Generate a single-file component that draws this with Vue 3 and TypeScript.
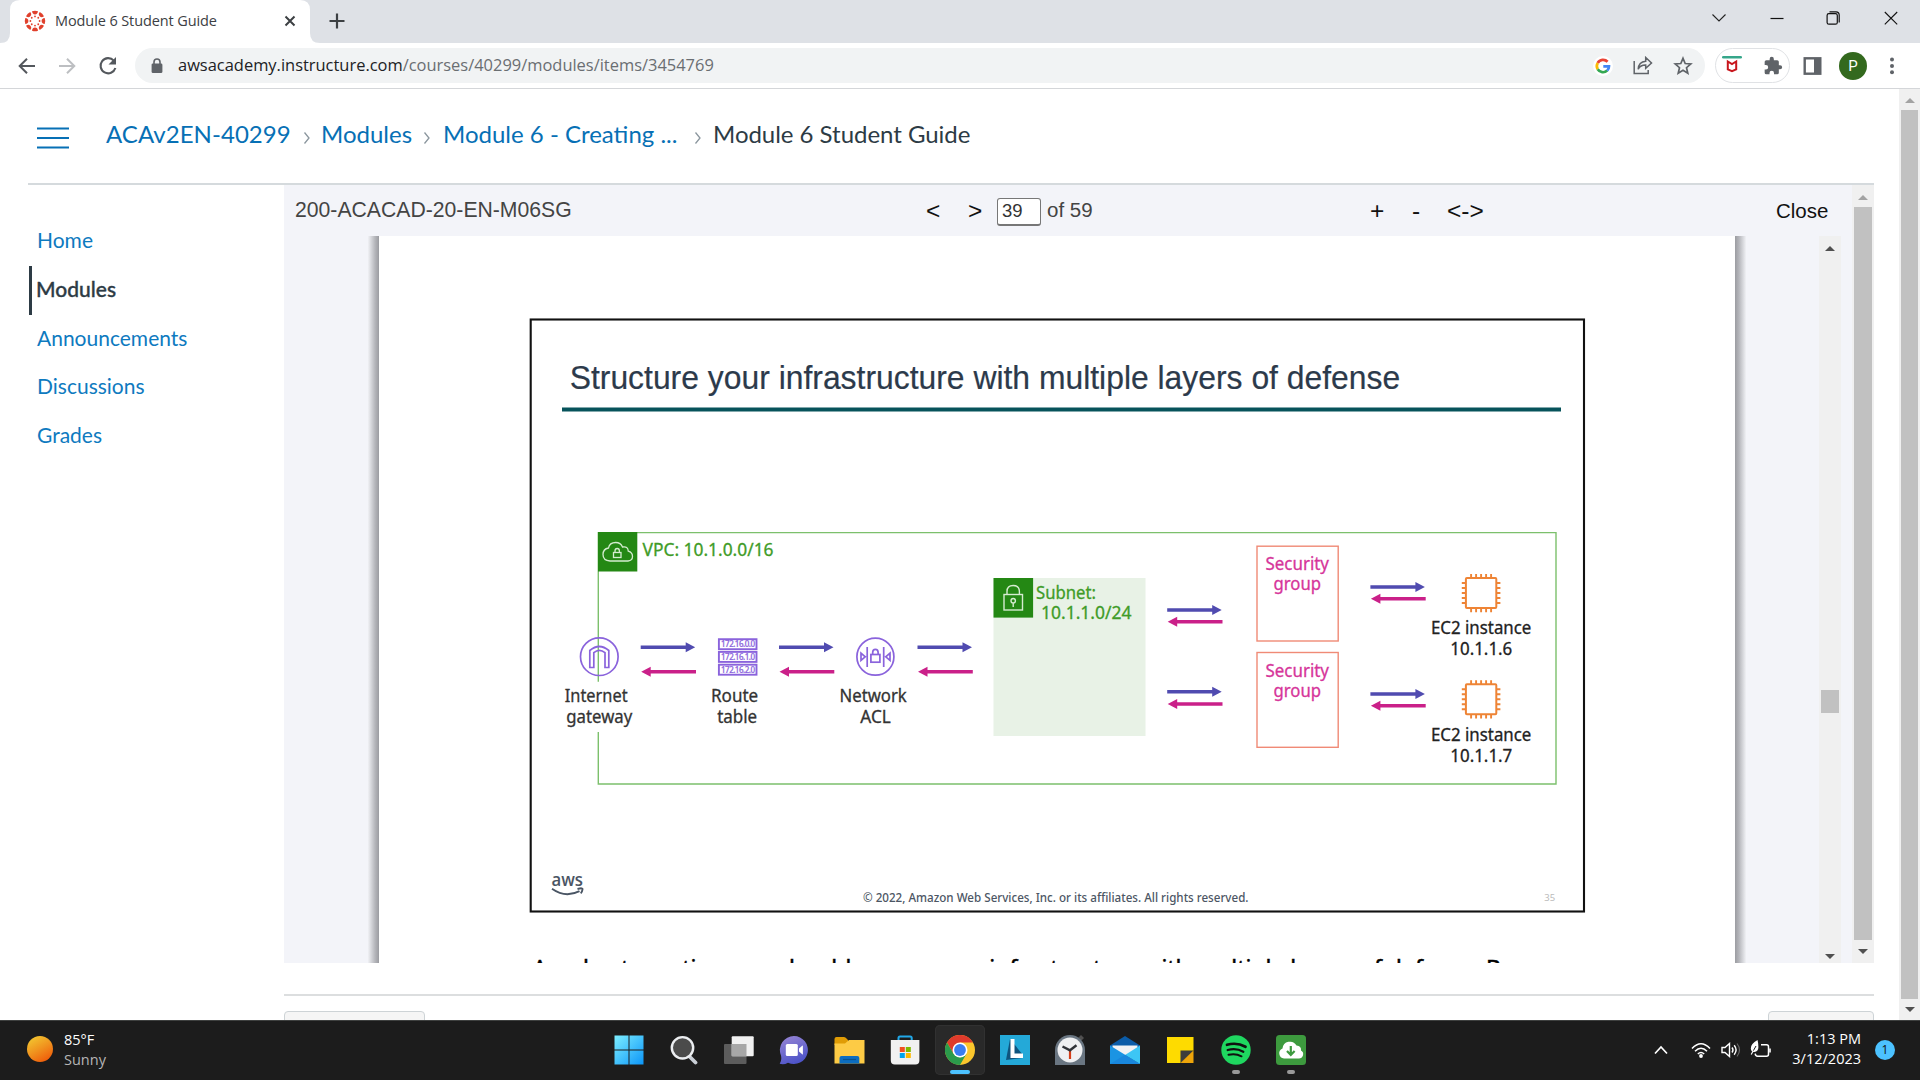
<script setup lang="ts">
interface Arrow { x: number; y: number; w: number; back: boolean }
interface Label { t: string; x: number; y: number; w: number; c?: string }

const nav: string[] = ['Home', 'Modules', 'Announcements', 'Discussions', 'Grades']

const pair = (x: number, y1: number, y2: number): Arrow[] => [
  { x, y: y1, w: 54.5, back: false },
  { x: x + 0.5, y: y2, w: 54.8, back: true },
]
const arrows: Arrow[] = [
  ...pair(640.7, 647.3, 671.7),
  ...pair(779, 647.3, 671.7),
  ...pair(917.5, 647.3, 671.7),
  ...pair(1167.2, 610, 621.7),
  ...pair(1167.2, 691.7, 704),
  ...pair(1370.4, 587, 598.7),
  ...pair(1370.4, 694, 705.7),
]
const arrowPath = (a: Arrow): string =>
  a.back
    ? `M${a.x} ${a.y}l9.5-5v3.3h${a.w - 9.5}v3.4h-${a.w - 9.5}v3.3z`
    : `M${a.x + a.w} ${a.y}l-9.5-5v3.3h-${a.w - 9.5}v3.4h${a.w - 9.5}v3.3z`

const green = '#3f9c28'
const pink = '#d6359a'
const labels: Label[] = [
  { t: 'VPC: 10.1.0.0/16', x: 642.5, y: 556, w: 131, c: green },
  { t: 'Subnet:', x: 1036, y: 598.5, w: 60, c: green },
  { t: '10.1.1.0/24', x: 1041, y: 619.3, w: 90.5, c: green },
  { t: 'Internet', x: 564.8, y: 702.4, w: 62.8, c: '#333' },
  { t: 'gateway', x: 566.3, y: 723, w: 66, c: '#333' },
  { t: 'Route', x: 711, y: 702.4, w: 47.2, c: '#333' },
  { t: 'table', x: 717.2, y: 722.8, w: 40, c: '#333' },
  { t: 'Network', x: 839.5, y: 702.4, w: 67.3, c: '#333' },
  { t: 'ACL', x: 860.3, y: 723, w: 30.5, c: '#333' },
  { t: 'Security', x: 1265.5, y: 570.3, w: 63.5, c: pink },
  { t: 'group', x: 1273.5, y: 590.4, w: 47.5, c: pink },
  { t: 'Security', x: 1265.5, y: 677.2, w: 63.5, c: pink },
  { t: 'group', x: 1273.5, y: 697.4, w: 47.5, c: pink },
  { t: 'EC2 instance', x: 1431, y: 634, w: 100.3, c: '#222' },
  { t: '10.1.1.6', x: 1450.3, y: 654.7, w: 62, c: '#222' },
  { t: 'EC2 instance', x: 1431, y: 741, w: 100.3, c: '#222' },
  { t: '10.1.1.7', x: 1450.3, y: 761.5, w: 62, c: '#222' },
]
const pins = [-10, -5, 0, 5, 10]
const rays = Array.from({ length: 8 }, (_, i) => i * 45)
</script>

<template>
  <div class="screen">
    <header class="tabs">
      <svg class="tabshape" width="332" height="43" viewBox="0 0 332 43">
        <path d="M0 43q10 0 10-10V10Q10 0 20 0h280q10 0 10 10v23q0 10 10 10z" fill="#fff" />
      </svg>
      <div class="tab">
        <svg class="fav" width="22" height="22" viewBox="-11 -11 22 22">
          <g fill="#e0402c">
            <g v-for="r in rays" :key="r" :transform="`rotate(${r})`">
              <path d="M-3-9.700Q0-10.800 3-9.700Q2.600-6.600 0-6.600T-3-9.700z" />
              <circle cy="-4.600" r=".9" />
            </g>
          </g>
        </svg>
        <span class="tabtitle">Module 6 Student Guide</span>
        <svg class="tabx" width="12" height="12" viewBox="0 0 12 12"><path d="M1.500 1.500l9 9m0-9l-9 9" stroke="#3c4043" stroke-width="2" /></svg>
      </div>
      <svg class="plus" width="16" height="16" viewBox="0 0 16 16"><path d="M8 .5v15M.5 8h15" stroke="#3c4043" stroke-width="2.200" /></svg>
      <div class="winctl">
        <svg width="16" height="16" viewBox="0 0 16 16"><path d="M1.500 4.500L8 11l6.500-6.500" fill="none" stroke="#222" stroke-width="1.100" /></svg>
        <svg width="14" height="16" viewBox="0 0 14 16"><path d="M.5 8.500h13" stroke="#111" stroke-width="1.200" /></svg>
        <svg width="15" height="16" viewBox="0 0 15 16"><g fill="none" stroke="#111" stroke-width="1.200"><rect x="1.100" y="3.600" width="10.200" height="10.600" rx="1.800" /><path d="M3.500 1.900h6.500q3.200 0 3.200 3.200v7.400" /></g></svg>
        <svg width="14" height="16" viewBox="0 0 14 16"><path d="M.8 2l12.400 12.400m0-12.400L.8 14.400" stroke="#111" stroke-width="1.100" /></svg>
      </div>
    </header>

    <div class="toolbar">
      <svg class="nav1" width="18" height="18" viewBox="0 0 18 18"><path d="M17 9H2m7-7.300L1.700 9 9 16.300" fill="none" stroke="#54585d" stroke-width="2" /></svg>
      <svg class="nav2" width="18" height="18" viewBox="0 0 18 18"><path d="M1 9h15M9 1.700L16.300 9 9 16.300" fill="none" stroke="#bdbfc2" stroke-width="2" /></svg>
      <svg class="nav3" width="20" height="20" viewBox="0 0 20 20"><path d="M15.800 4.600A7.600 7.600 0 1 0 17.400 12" fill="none" stroke="#54585d" stroke-width="2.100" /><path d="M18 1v7.500h-7.500z" fill="#54585d" /></svg>
      <div class="omni">
        <svg class="lock" width="12" height="16" viewBox="0 0 12 16"><rect x=".6" y="5.500" width="10.800" height="9.500" rx="1.300" fill="#5f6368" /><path d="M3 6V4a3 3 0 0 1 6 0v2" fill="none" stroke="#5f6368" stroke-width="1.600" /></svg>
        <span class="url"><b>awsacademy.instructure.com</b>/courses/40299/modules/items/3454769</span>
        <svg class="goog" width="20" height="20" viewBox="0 0 20 20"><circle cx="10" cy="10" r="10" fill="#fff" /><g fill="none" stroke-width="2.700"><path d="M14.600 5.800A6.200 6.200 0 0 0 4.700 7" stroke="#ea4335" /><path d="M4.700 7a6.200 6.200 0 0 0 0 6.300" stroke="#fbbc05" /><path d="M4.700 13.300a6.200 6.200 0 0 0 9.500 1.300" stroke="#34a853" /><path d="M14.200 14.600A6 6 0 0 0 16 10.300H10.300" stroke="#4285f4" /></g></svg>
        <svg class="share" width="20" height="19" viewBox="0 0 20 19"><path d="M1.200 5v12.500h14V14M5.200 13.200q.4-7.500 7.500-8V1.500L18.500 7l-5.800 5.200V9.100Q7.500 9 5.200 13.200z" fill="none" stroke="#5f6368" stroke-width="1.500" /></svg>
        <svg class="star" width="20" height="20" viewBox="0 0 20 20"><path d="M10 2.300l2.200 5.200 5.600.5-4.300 3.700 1.300 5.500L10 14.300l-4.800 2.900 1.300-5.500L2.200 8l5.600-.5z" fill="none" stroke="#5f6368" stroke-width="1.700" /></svg>
      </div>
      <div class="ext">
        <svg width="22" height="20" viewBox="0 0 22 20"><rect x="1" y="0" width="20" height="2.600" rx="1.300" fill="#35a68a" /><path d="M6.800 5.500v7.800l4.200 1.900 4.200-1.900V5.500L11 8z" fill="none" stroke="#c8161d" stroke-width="2" /></svg>
        <svg width="20" height="20" viewBox="0 0 24 24"><path fill="#5f6368" d="M20.500 11H19V7a2 2 0 0 0-2-2h-4V3.500a2.500 2.500 0 0 0-5 0V5H4a2 2 0 0 0-2 2v3.800h1.500a2.700 2.700 0 0 1 0 5.400H2V20a2 2 0 0 0 2 2h3.800v-1.500a2.700 2.700 0 0 1 5.400 0V22H17a2 2 0 0 0 2-2v-4h1.500a2.500 2.500 0 0 0 0-5z" /></svg>
      </div>
      <svg class="side" width="19" height="18" viewBox="0 0 19 18"><rect x="1.700" y="1.300" width="15.600" height="15.400" fill="#fff" stroke="#5f6368" stroke-width="2.400" /><path d="M11 1h7v16h-7z" fill="#5f6368" /></svg>
      <div class="avatar">P</div>
      <svg class="dots" width="6" height="18" viewBox="0 0 6 18"><g fill="#5f6368"><circle cx="3" cy="2.500" r="2" /><circle cx="3" cy="8.900" r="2" /><circle cx="3" cy="15.300" r="2" /></g></svg>
    </div>

    <div class="viewport">
      <div class="canvas">
        <div class="crumbs">
          <svg class="burger" width="33" height="24" viewBox="0 0 33 24"><path d="M0 2.500h32M0 12h32M0 21.500h32" stroke="#0770b5" stroke-width="2" /></svg>
          <a class="c1">ACAv2EN-40299</a>
          <svg class="sep s1" width="8" height="14" viewBox="0 0 8 14"><path d="M1.500 1.500L6 7l-4.500 5.500" fill="none" stroke="#8b969e" stroke-width="1.300" /></svg>
          <a class="c2">Modules</a>
          <svg class="sep s2" width="8" height="14" viewBox="0 0 8 14"><path d="M1.500 1.500L6 7l-4.500 5.500" fill="none" stroke="#8b969e" stroke-width="1.300" /></svg>
          <a class="c3">Module 6 - Creating ...</a>
          <svg class="sep s3" width="8" height="14" viewBox="0 0 8 14"><path d="M1.500 1.500L6 7l-4.500 5.500" fill="none" stroke="#8b969e" stroke-width="1.300" /></svg>
          <span class="c4">Module 6 Student Guide</span>
        </div>
        <div class="body">
          <nav class="menu">
            <a v-for="n in nav" :key="n" :class="{ on: n === 'Modules' }">{{ n }}</a>
          </nav>
          <main class="main">
            <div class="frame">
              <div class="viewer">
                <div class="vbar">
                  <span class="doc">200-ACACAD-20-EN-M06SG</span>
                  <span class="sym prev">&lt;</span>
                  <span class="sym next">&gt;</span>
                  <span class="num">39</span>
                  <span class="of">of 59</span>
                  <span class="sym zin">+</span>
                  <span class="sym zout">-</span>
                  <span class="sym fit">&lt;-&gt;</span>
                  <span class="close">Close</span>
                </div>
                <div class="pages">
                  <div class="shade left"></div>
                  <svg class="page" width="1356" height="727" viewBox="379 236 1356 727">
                    <rect x="379" y="236" width="1356" height="727" fill="#fff" />
                    <rect x="530.700" y="319.500" width="1053.300" height="592" fill="none" stroke="#111" stroke-width="2.100" />
                    <text x="569.700" y="388.500" textLength="830.500" lengthAdjust="spacingAndGlyphs" class="title">Structure your infrastructure with multiple layers of defense</text>
                    <rect x="562" y="407.500" width="999" height="4" fill="#07535b" />
                    <path d="M598.300 681.700V532.600H1556V784H598.300V732" fill="none" stroke="#7cc06c" stroke-width="1.400" />
                    <rect x="598" y="532" width="39.300" height="39.500" fill="#248814" />
                    <g fill="none" stroke="#d5ecd0" stroke-width="1.300">
                      <path d="M610 561q-7-.5-7-6.500 0-5.500 5.500-6.500 1-5.500 7.200-5.500 5 0 6.800 4.500 5.500-1 5.800 4.200 4.200 1.200 4.200 5.300 0 4-4.500 4.500z" />
                      <rect x="613.500" y="552.500" width="7.500" height="5" /><path d="M615 552.500v-1.500q0-2.500 2.200-2.500t2.200 2.500v1.500" />
                    </g>
                    <rect x="993.500" y="578" width="152" height="158" fill="#e8f2e6" />
                    <rect x="993.500" y="578" width="39.600" height="39.600" fill="#248814" />
                    <g fill="none" stroke="#d5ecd0" stroke-width="1.400">
                      <rect x="1004" y="594.500" width="18.500" height="15.500" /><path d="M1007 594.500v-3q0-6 6.200-6t6.200 6v3" /><circle cx="1013.200" cy="600.700" r="2.200" /><path d="M1013.200 603v4" />
                    </g>

                    <g fill="none" stroke="#8a63dc" stroke-width="1.700">
                      <circle cx="599.300" cy="656.700" r="18.800" />
                      <path d="M589.800 667.500V650.500Q599.300 642.500 608.800 650.500V667.500H605V652.700Q599.300 648 593.800 652.700V667.500z" />
                      <circle cx="875.400" cy="656.700" r="18.500" />
                      <path d="M867.200 647v20M883.700 647v20M861 653.200l4.200 3.600-4.200 3.600zM890 653.200l-4.200 3.600 4.200 3.600z" />
                      <rect x="870.900" y="654.500" width="9" height="7.700" /><path d="M872.700 654.500v-2.200q0-3 2.700-3t2.700 3v2.200" />
                      <g stroke-width="1.900">
                        <rect x="718.900" y="639.200" width="37.600" height="10" /><rect x="718.900" y="651.900" width="37.600" height="10" /><rect x="718.900" y="664.700" width="37.600" height="10" />
                      </g>
                    </g>
                    <g class="ip">
                      <text x="721" y="647.200" textLength="34">172.16.0.0</text>
                      <text x="721" y="659.900" textLength="34">172.16.1.0</text>
                      <text x="721" y="672.700" textLength="34">172.16.2.0</text>
                    </g>

                    <path v-for="(a, i) in arrows" :key="i" :d="arrowPath(a)" :fill="a.back ? '#ca2089' : '#504bb0'" />
                    <g fill="none" stroke="#f08a76" stroke-width="1.400">
                      <rect x="1257" y="546.200" width="81.200" height="94.800" />
                      <rect x="1257" y="652.500" width="81.200" height="94.800" />
                    </g>
                    <g v-for="cy in [593, 699.3]" :key="cy" :transform="`translate(1481.1 ${cy})`" fill="none" stroke="#ee8435">
                      <rect x="-15.200" y="-15" width="30.400" height="30" rx="1" stroke-width="2" />
                      <path v-for="p in pins" :key="p" :d="`M${p}-19v4M${p} 15v4.200M-19.300 ${p}h4M15 ${p}h4.300`" stroke-width="1.900" />
                    </g>
                    <text v-for="(l, i) in labels" :key="'l' + i" :x="l.x" :y="l.y" :textLength="l.w" :fill="l.c" :stroke="l.c" lengthAdjust="spacingAndGlyphs" class="lab">{{ l.t }}</text>

                    <text x="551.500" y="886" textLength="31.500" lengthAdjust="spacingAndGlyphs" class="aws">aws</text>
                    <path d="M552 888.800q13.500 9.500 27.500 2.300M577.500 889q5.500-1.500 5 .3-.3 2.500-1.800 4" fill="none" stroke="#4a5564" stroke-width="1.900" />
                    <text x="863" y="901.500" textLength="385.500" lengthAdjust="spacingAndGlyphs" class="copy">© 2022, Amazon Web Services, Inc. or its affiliates. All rights reserved.</text>
                    <text x="1544.300" y="901.300" textLength="11" class="pg">35</text>
                    <text x="532.500" y="977" textLength="980" lengthAdjust="spacingAndGlyphs" class="para">As a best practice, you should secure your infrastructure with multiple layers of defense. By</text>
                  </svg>
                  <div class="shade right"></div>
                  <div class="sb inner">
                    <i class="up dark"></i><div class="thumb"></div><i class="down dark"></i>
                  </div>
                </div>
              </div>
              <div class="sb outer"><i class="up"></i><div class="thumb"></div><i class="down dark"></i></div>
            </div>
            <div class="foot"><div class="btn b1"></div><div class="btn b2"></div></div>
          </main>
        </div>
      </div>
      <div class="sb win"><i class="up"></i><div class="thumb"></div><i class="down dark"></i></div>
    </div>

    <footer class="task">
      <div class="weather">
        <div class="sun"></div>
        <div class="wt"><div class="deg">85°F</div><div class="sunny">Sunny</div></div>
      </div>
      <div class="apps">
        <div class="app"><svg width="30" height="30" viewBox="0 0 30 30"><defs><linearGradient id="w" gradientUnits="userSpaceOnUse" x1="0" y1="0" x2="30" y2="30"><stop offset="0" stop-color="#7ff0ff" /><stop offset="1" stop-color="#0a94f8" /></linearGradient></defs><path d="M.5.500h14v14H.5zM15.500.500h14v14h-14zM.5 15.500h14v14H.5zM15.500 15.500h14v14h-14z" fill="url(#w)" /></svg></div>
        <div class="app"><svg width="30" height="30" viewBox="0 0 30 30"><path d="M19.500 20.500l7 7" stroke="#c9ced6" stroke-width="3.800" stroke-linecap="round" /><circle cx="13.500" cy="12.800" r="10.700" fill="#4b4b4b" stroke="#eceef1" stroke-width="2.400" /></svg></div>
        <div class="app"><svg width="30" height="30" viewBox="0 0 30 30"><rect x="0" y="9" width="22.500" height="20" rx="1" fill="#5c5c5c" /><rect x="7.700" y="1.200" width="22" height="20" rx="1" fill="#f1f1f1" /><path d="M7.700 9h14.800v12.200H7.700z" fill="#a7a7a7" /></svg></div>
        <div class="app"><svg width="30" height="30" viewBox="0 0 30 30"><defs><linearGradient id="ch" x1="0" y1="0" x2=".4" y2="1"><stop offset="0" stop-color="#9a87d4" /><stop offset="1" stop-color="#4f55c9" /></linearGradient></defs><path d="M15 1a14 14 0 1 1-6 26.700Q5 30 .7 28.800 3 26 2 20.500A14 14 0 0 1 15 1z" fill="url(#ch)" /><rect x="6.800" y="9" width="12" height="12" rx="1.500" fill="#fff" /><path d="M20 13.500l3.500-3q.4 0 .4.500v8q0 .5-.4.500l-3.500-3z" fill="#fff" /></svg></div>
        <div class="app"><svg width="31" height="30" viewBox="0 0 31 30"><path d="M.5 4q0-2 2-2h7.500q1.500 0 2.500 1.500L14 5v5H.5z" fill="#e09c05" /><path d="M.5 8.500H11L15 5h15.500v23.500H.5z" fill="#fdcb45" /><path d="M5.500 28.500V23q0-2 2-2h15.800q2 0 2 2v5.500z" fill="#0c6dc0" /><path d="M9 24.500h13" stroke="#07528f" stroke-width="1.200" /></svg></div>
        <div class="app"><svg width="30" height="30" viewBox="0 0 30 30"><path d="M8.500 6V3q0-1.500 1.500-1.500h10.200q1.500 0 1.500 1.500v3" fill="none" stroke="#21a8e8" stroke-width="2" /><path d="M.8 5h28.600v20.500q0 4-4 4H4.800q-4 0-4-4z" fill="#f1f1f1" /><path d="M9.800 12h5v5h-5z" fill="#f25022" /><path d="M15.800 12h5v5h-5z" fill="#7fba00" /><path d="M9.800 18h5v5h-5z" fill="#00a4ef" /><path d="M15.800 18h5v5h-5z" fill="#ffb900" /></svg></div>
        <div class="app active"><svg width="30" height="30" viewBox="-15 -15 30 30"><circle r="15" fill="#fbc62c" /><path d="M0-7.500h13A15 15 0 0 0-13-7.500L-6.500 3.750z" fill="#df3a2c" /><path d="M-13-7.500A15 15 0 0 0 0 15L6.500 3.750 0 7.500-6.500 3.750z" fill="#2b9b4b" /><circle r="7.500" fill="#fff" /><circle r="5.900" fill="#3a7df0" /></svg><i class="ind blue"></i></div>
        <div class="app"><svg width="30" height="30" viewBox="0 0 30 30"><path d="M0 0h30v30H0z" fill="#24a9d8" /><path d="M10 4L6 25l17-2v-3z" fill="#0f547e" /><path d="M10.500 4h4v14.500h8.500V23H10.500z" fill="#fff" /></svg></div>
        <div class="app"><svg width="30" height="30" viewBox="0 0 30 30"><path d="M23 3l3-3 3 3-3 3z" fill="#505050" /><path d="M0 15A15 15 0 0 1 30 15v15H0z" fill="#6a7682" /><circle cx="15" cy="15" r="12.500" fill="#eff0f2" /><path d="M15 15v9" stroke="#d53d18" stroke-width="2.200" /><path d="M7.500 11.500L15 15.300l6.500-5" fill="none" stroke="#303338" stroke-width="2.400" /></svg></div>
        <div class="app"><svg width="30" height="30" viewBox="0 0 30 30"><path d="M0 10.500L15 1l15 9.500v5H0z" fill="#0b5ca8" /><path d="M2.500 10.500h25V20h-25z" fill="#f1f2f4" /><path d="M0 10.500L30 29H0z" fill="#1b94e3" /><path d="M30 10.500v18.500L15 20z" fill="#3dc6f5" /><path d="M0 29L15 19.700 30 29z" fill="#1987dd" /></svg></div>
        <div class="app"><svg width="28" height="28" viewBox="0 0 28 28"><path d="M1 1h26.500v13.500L14.500 27H1z" fill="#fedb00" /><path d="M14.500 14.500h13L14.500 27z" fill="#3c3c3c" /><path d="M27.500 14.500V27h-13z" fill="#eea50a" /></svg></div>
        <div class="app"><svg width="30" height="30" viewBox="0 0 30 30"><circle cx="15" cy="15" r="14.700" fill="#1fd760" /><g fill="none" stroke="#101010" stroke-linecap="round"><path d="M6 9.800q10-2.800 18.500 2" stroke-width="2.700" /><path d="M6.700 15q8.500-2.300 15.600 1.700" stroke-width="2.300" /><path d="M7.500 19.800q7-1.800 13 1.500" stroke-width="2" /></g></svg><i class="ind"></i></div>
        <div class="app"><svg width="30" height="30" viewBox="0 0 30 30"><rect width="30" height="30" rx="3.500" fill="#3d9a3e" /><path d="M8 23.500a5.200 5.200 0 0 1-1.500-10A7.500 7.500 0 0 1 20.500 10.500q5 .5 4.500 5a4.300 4.300 0 0 1-2.500 8z" fill="#fff" /><path d="M14.800 11v8.500M11 16l3.800 4 3.800-4" fill="none" stroke="#3d9a3e" stroke-width="2.200" /></svg><i class="ind"></i></div>
      </div>
      <div class="tray">
        <svg class="tc" width="14" height="10" viewBox="0 0 14 10"><path d="M1 8.500L7 2l6 6.500" fill="none" stroke="#fff" stroke-width="1.700" /></svg>
        <svg class="tw" width="20" height="16" viewBox="0 0 20 16"><g fill="none" stroke="#fff" stroke-width="1.500"><path d="M1 6.500q9-9.500 18 0M4 9.300q6-6 12 0M6.800 12q3.200-3 6.400 0" /></g><circle cx="10" cy="14" r="1.900" fill="#fff" /></svg>
        <svg class="ts" width="20" height="16" viewBox="0 0 20 16"><path d="M1 5.500h3L8.500 1.500v13L4 10.500H1z" fill="none" stroke="#fff" stroke-width="1.400" /><path d="M11 5.500q2 2.500 0 5M13.200 3.300q3.800 4.700 0 9.400" fill="none" stroke="#fff" stroke-width="1.400" /><path d="M16 1.500q5 6.500 0 13" fill="none" stroke="#666" stroke-width="1.200" /></svg>
        <svg class="tb" width="21" height="18" viewBox="0 0 21 18"><path d="M11 4.800h5.500q2 0 2 2v7.400q0 2-2 2h-9q-2 0-2.300-2.500" fill="none" stroke="#fff" stroke-width="1.500" /><path d="M20 8.500v4" stroke="#fff" stroke-width="1.600" /><path d="M7.500 0Q.5 4 .8 8.500q.2 3.500 3.600 3.500 4-.5 4-5Q8.400 3 7.500 0z" fill="#fff" /><path d="M1.200 14.500L6 6" stroke="#fff" stroke-width="1.200" /><path d="M3.400 10.600L6 6" stroke="#1c1c1c" stroke-width="1" /></svg>
        <div class="clock"><div class="tm">1:13 PM</div><div class="dt">3/12/2023</div></div>
        <div class="badge">1</div>
      </div>
    </footer>
  </div>
</template>

<style>
html, body { margin: 0; overflow: hidden; background: #fff; }
</style>

<style scoped>
* { box-sizing: border-box; }
svg { display: block; flex: none; }
.screen { width: 1920px; height: 1080px; display: flex; flex-direction: column; overflow: hidden; background: #fff; font-family: "Open Sans", "Noto Sans", sans-serif; white-space: nowrap; }
.tabs { position: relative; height: 43px; flex: none; background: #dee1e6; display: flex; align-items: center; }
.tabshape { position: absolute; left: 0; top: 0; }
.tab { position: relative; width: 310px; height: 43px; display: flex; align-items: center; padding: 0 14px 2px 24px; }
.tabtitle { margin-left: 9px; font-size: 14.500px; color: #3c4043; width: 164px; letter-spacing: -.1px; }
.tabx { margin-left: auto; }
.plus { margin-left: 19px; margin-bottom: 1px; }
.winctl { margin-left: auto; display: flex; gap: 42.600px; padding: 0 22px 7px 0; }
.toolbar { height: 46px; flex: none; display: flex; align-items: center; border-bottom: 1px solid #d4d6d9; padding-left: 18px; }
.nav2 { margin-left: 22px; }
.nav3 { margin-left: 22px; }
.omni { margin-left: 17px; width: 1570px; height: 35px; border-radius: 18px; background: #f1f3f4; display: flex; align-items: center; padding-left: 16px; }
.url { margin: -2px 0 0 15px; font-size: 16.450px; color: #6a6e72; }
.url b { font-weight: 400; color: #202124; }
.goog { margin-left: auto; }
.share { margin-left: 20px; }
.star { margin-left: 20px; margin-right: 12px; }
.ext { margin-left: 10px; width: 75px; height: 35px; border: 1.500px solid #e0e2e5; border-radius: 18px; display: flex; align-items: center; justify-content: space-between; padding: 0 6px 0 5px; }
.side { margin-left: 13px; }
.avatar { margin-left: 17px; width: 28px; height: 28px; border-radius: 50%; background: #33691e; color: #fff; font: 15px/28px Roboto, sans-serif; text-align: center; }
.dots { margin-left: 22px; }

.viewport { height: 931px; flex: none; display: flex; }
.canvas { flex: 1; min-width: 0; display: flex; flex-direction: column; overflow: hidden; padding: 0 25px 0 28px; }
.crumbs { height: 96px; flex: none; border-bottom: 2px solid #d5dadd; display: flex; align-items: center; padding-left: 9px; font: 24px/30px Lato, sans-serif; color: #0770b5; }
.crumbs a, .crumbs span { margin-top: -4px; }
.burger { margin-top: 4px; }
.sep { margin-top: 3px; }
.c1 { width: 186px; margin-left: 36px; letter-spacing: .05px; }
.s1 { margin-left: 11px; }
.c2 { width: 91px; margin-left: 10px; }
.s2 { margin-left: 11px; }
.c3 { width: 235px; margin-left: 12px; }
.s3 { margin-left: 16px; }
.crumbs .c4 { margin-left: 11px; color: #2d3b45; letter-spacing: -.03px; }
.body { flex: 1; min-height: 0; display: flex; }
.menu { width: 256px; flex: none; display: flex; flex-direction: column; padding-top: 32px; font: 21px/46.800px Lato, sans-serif; }
.menu a { color: #0e7abf; height: 48.800px; margin-left: 1px; padding-left: 5px; border-left: 3px solid transparent; }
.menu a.on { color: #2d3b45; border-color: #2d3b45; font-weight: 500; -webkit-text-stroke: .35px #2d3b45; padding-left: 4px; }
.main { flex: 1; min-width: 0; display: flex; flex-direction: column; }
.frame { height: 778px; flex: none; display: flex; background: #f3f4f9; }
.viewer { flex: 1; min-width: 0; display: flex; flex-direction: column; }
.vbar { height: 51px; flex: none; display: flex; align-items: center; font: 20.500px/26px "Liberation Sans", sans-serif; color: #111; padding-left: 11px; }
.vbar span { flex: none; }
.vbar .doc { width: 631px; color: #444; font-size: 21.200px; }
.vbar .doc, .vbar .of { margin-top: -1px; }
.sym { font-size: 24.500px; }
.vbar .prev { width: 42px; }
.vbar .next { width: 29px; }
.vbar .num { width: 44px; height: 28px; margin-top: 3px; border: 1px solid #777; border-bottom-width: 2px; border-radius: 3px; background: #fff; padding-left: 4px; font-size: 18.500px; line-height: 24px; color: #333; }
.of { width: 323px; margin-left: 6px; color: #444; }
.zin { width: 42px; }
.zout { width: 35px; }
.fit { width: 329px; }
.close { margin-top: 1px; }
.pages { flex: 1; min-height: 0; display: flex; overflow: hidden; padding-left: 84px; }
.shade { width: 11px; }
.left { background: linear-gradient(to right, #f0f1f5, #b4b5ba 65%, #9b9ca1); }
.right { background: linear-gradient(to left, #f0f1f5, #b4b5ba 65%, #9b9ca1); }
.title { font-family: "Liberation Sans", sans-serif; font-size: 32.300px; fill: #2c3a4b; stroke: #2c3a4b; stroke-width: .2px; }
.lab { font-family: "Noto Sans", "Open Sans", sans-serif; font-size: 17.300px; stroke-width: .3px; }
.ip { font: 500 8px "Noto Sans", sans-serif; fill: #8a63dc; stroke: #8a63dc; stroke-width: .2px; }
.aws { font: 600 17.500px "Open Sans", sans-serif; fill: #4a5564; }
.copy { font: 500 12.300px "Noto Sans", sans-serif; fill: #4c5664; }
.pg { font: 9.500px "Noto Sans", sans-serif; fill: #bbb; }
.para { font: 23.500px "Noto Sans", sans-serif; fill: #000; stroke: #000; stroke-width: .5px; }
.sb { background: #f0f0f0; display: flex; flex-direction: column; align-items: center; flex: none; }
.sb i { width: 0; height: 0; border: 5px solid transparent; border-top: 0; border-bottom: 5px solid #a3a3a3; }
.sb i.down { border: 5px solid transparent; border-bottom: 0; border-top: 5px solid #505050; }
.sb i.up.dark { border-bottom-color: #505050; }
.thumb { background: #c1c1c1; flex: none; }
.inner { width: 22px; margin-left: 73px; padding-top: 10px; }
.inner .thumb { width: 18px; height: 23px; margin: 439px 0 241px; }
.outer { width: 22px; padding-top: 10px; }
.outer .thumb { width: 18px; height: 733px; margin: 7px 0 9px; }
.win { width: 21px; padding-top: 9px; }
.win .thumb { width: 17px; height: 889px; margin: 7px 0 8px; }
.foot { flex: 1; margin-top: 31px; border-top: 2px solid #dcdedf; display: flex; justify-content: space-between; padding-top: 15px; }
.btn { height: 30px; border: 1.500px solid #cdd3d6; background: #f5f5f5; border-radius: 4px; }
.b1 { width: 141px; }
.b2 { width: 106px; }

.task { position: relative; height: 60px; flex: none; background: #1c1c1c; border-top: 1px solid #3e403f; display: flex; align-items: stretch; justify-content: space-between; }
.weather { display: flex; padding-left: 27px; width: 604px; flex: none; }
.sun { width: 26px; height: 26px; border-radius: 50%; margin-top: 15px; background: linear-gradient(150deg, #f2c42f 10%, #f0921e 50%, #ef610c 85%); }
.wt { margin: 9px 0 0 11px; font-size: 14.500px; line-height: 20px; color: #fff; }
.sunny { color: #b5b5b5; }
.apps { display: flex; flex: none; padding-top: 4px; gap: 5.150px; }
.app { position: relative; width: 50px; height: 50px; display: flex; align-items: center; justify-content: center; border-radius: 5px; }
.active { background: #292929; box-shadow: inset 0 0 0 1px #313131; }
.ind { position: absolute; bottom: 1px; left: 21px; width: 8px; height: 4px; border-radius: 2px; background: #999; }
.ind.blue { left: 15px; width: 20px; background: #4cc2ff; }
.tray { margin-left: auto; display: flex; align-items: center; padding-right: 25px; }
.tc { margin-top: -2px; }
.tw { margin-left: 23px; margin-top: -2px; }
.ts { margin-left: 10px; margin-top: -2px; }
.tb { margin-left: 9px; margin-top: -4px; }
.clock { width: 90px; text-align: right; font-size: 14.500px; line-height: 20px; color: #fff; margin-top: -3px; }
.badge { margin: -1px 0 0 14px; width: 20px; height: 20px; border-radius: 50%; background: #4cc2ff; color: #111; font-size: 12px; line-height: 20px; text-align: center; }
</style>
